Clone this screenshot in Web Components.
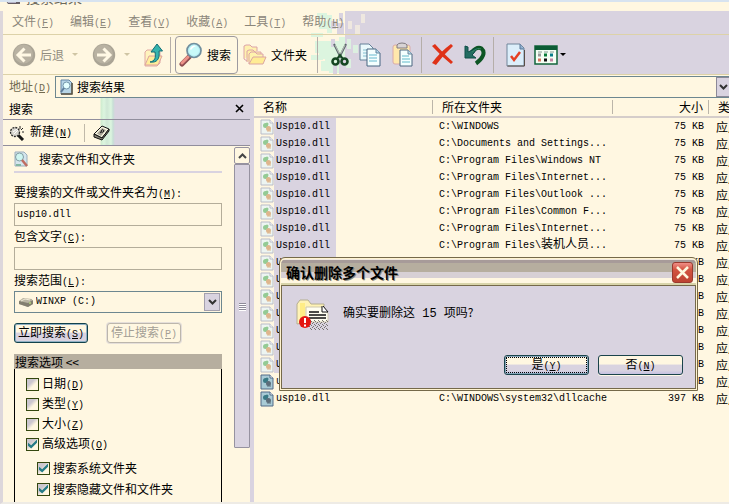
<!DOCTYPE html>
<html lang="zh-CN">
<head>
<meta charset="utf-8">
<title>搜索结果</title>
<style>
  :root {
    --cream: #fff7e1;
    --lavender: #d9d3e0;
    --mint: #dcf5df;
    --rule: #ddd2a8;
    --steel: #6d8790;
  }
  html, body {
    height: 100%;
    margin: 0;
    overflow: hidden;
  }
  body {
    background: var(--cream);
    color: #000;
    font: 12px/16px "Noto Sans CJK SC", sans-serif;
  }
</style>
</head>
<body>
<search-window></search-window>

<script>
const base = `
  *, *::before, *::after { box-sizing: border-box; }
  :host([hidden]) { display: none; }
  svg { display: block; flex: none; }
  button, input, select { font: inherit; color: inherit; margin: 0; padding: 0; }
  .mono { font-family: "Liberation Mono", "Noto Sans CJK SC", monospace; font-size: 10px; }
`;

const key = (letter) => `<span class="mono">(<u>${letter}</u>)</span>`;

const icons = {
  back: `<svg width="24" height="24" viewBox="0 0 24 24"><circle cx="12" cy="12" r="11.2" fill="#aaa495"/><circle cx="11.5" cy="11" r="9.5" fill="#b9b2a2"/><path d="M12.5 5.500 6 12l6.500 6.500M6.500 12H19" fill="none" stroke="#fff8e4" stroke-width="3"/></svg>`,
  forward: `<svg width="24" height="24" viewBox="0 0 24 24"><circle cx="12" cy="12" r="11.2" fill="#aaa495"/><circle cx="11.5" cy="11" r="9.5" fill="#b9b2a2"/><path d="M11.5 5.500 18 12l-6.500 6.500M17.500 12H5" fill="none" stroke="#fff8e4" stroke-width="3"/></svg>`,
  up: `<svg width="20" height="24" viewBox="0 0 20 24"><path d="M1 9l2-2h5l2 2h6v11l-3 3H1z" fill="#fff3bd" stroke="#e0a9a3"/><path d="M1 22 5 13h13l-4 9z" fill="#ffee9a" stroke="#dda2a0"/><path d="M6 19c5-1 6-4 5-10H7l6-8 5.500 7H15c1 8-2 12-9 11z" fill="#35b4ad" stroke="#136d76"/></svg>`,
  search: `<svg width="24" height="25" viewBox="0 0 24 25"><path d="M10 15 3 22" stroke="#8e4d50" stroke-width="5" stroke-linecap="round"/><path d="M9 15 3 21" stroke="#ed9389" stroke-width="3" stroke-linecap="round"/><circle cx="15" cy="8.500" r="7" fill="#b6eef4" stroke="#718f9e" stroke-width="1.700"/><circle cx="15" cy="8.500" r="5" fill="#c8faf9"/><path d="M11 7q2-5 7-3-3 0-6 4z" fill="#fff"/></svg>`,
  folders: `<svg width="24" height="22" viewBox="0 0 24 22"><path d="M1 15V2l2-1h4l2 2h5v4M1 15l3 2" fill="#fff1af" stroke="#dca3a8"/><path d="M4 18V7l2-1h4l2 2h6v4" fill="#fff1a5" stroke="#dca3a8"/><path d="M6 20V10l2-2h4l2 2h6v3" fill="#fff3ad" stroke="#dca3a8"/><path d="M6 20 10 13h13l-3 7z" fill="#ffec94" stroke="#dba5a2"/></svg>`,
  cut: `<svg width="18" height="24" viewBox="0 0 18 24"><path d="M3 1 10 15M15 1 8 15" stroke="#59676b" stroke-width="2"/><path d="M4 2 10 14M14 2 8 14" stroke="#d7d9d0" stroke-width=".8"/><circle cx="4.500" cy="18.500" r="3" fill="none" stroke="#154622" stroke-width="2.600"/><circle cx="13.500" cy="18.500" r="3" fill="none" stroke="#154622" stroke-width="2.600"/><path d="M6 16 9 12l3 4" fill="none" stroke="#154622" stroke-width="2"/></svg>`,
  copy: `<svg width="23" height="24" viewBox="0 0 23 24"><path d="M1 1h9l4 4v12H1z" fill="#eaf9fb" stroke="#658099"/><path d="M4 7h7M4 10h7M4 13h7" stroke="#82bfd0"/><path d="M8 6h9l4 4v13H8z" fill="#f4ffff" stroke="#476481"/><path d="M17 6v4h4" fill="#b5d9ed" stroke="#60849c"/><path d="M10 12h8M10 15h8M10 18h8" stroke="#66b9cf"/></svg>`,
  paste: `<svg width="22" height="25" viewBox="0 0 22 25"><rect x="1" y="3" width="17" height="19" rx="2" fill="#ffe8ac" stroke="#d9aaaa"/><path d="M5 3q1-2 5-2t5 2v3H5z" fill="#d8d3d5" stroke="#817b80"/><path d="M8 8h8l4 4v12H8z" fill="#f4ffff" stroke="#4d6680"/><path d="M16 8v4h4" fill="#b8def0" stroke="#6b8398"/><path d="M10 14h7M10 17h8M10 20h8" stroke="#63b9ca"/></svg>`,
  remove: `<svg width="23" height="23" viewBox="0 0 23 23"><path d="M1 3 4 1q7 8 18 18l-2 2Q10 13 1 3z" fill="#df3218"/><path d="M20 1 22 3Q13 11 5 22l-4-2Q9 9 20 1z" fill="#df3218"/></svg>`,
  undo: `<svg width="23" height="22" viewBox="0 0 23 22"><path d="M7 9Q13 2 17.500 4.500c4.500 4 1 10.500-5.500 15" fill="none" stroke="#0d5524" stroke-width="4"/><path d="M1 2l3 1v5l9-4-3 5-2 2 4 3H1z" fill="#236c62" stroke="#0e4f48"/><path d="M8 8Q14 3 17 5" fill="none" stroke="#318a61"/></svg>`,
  check: `<svg width="20" height="24" viewBox="0 0 20 24"><path d="M1 1h13l4 4v18H1z" fill="#dceefa" stroke="#71859b"/><path d="M14 1v5h4" fill="#8eafd0" stroke="#5a7899"/><path d="M1.500 23h17V7" fill="none" stroke="#594d45"/><path d="M5 13 8 17 14 9" fill="none" stroke="#e54124" stroke-width="2.500"/></svg>`,
  views: `<svg width="24" height="20" viewBox="0 0 24 20"><rect x="1" y="1" width="22" height="18" fill="#f5fff4" stroke="#12653b" stroke-width="1.500"/><path d="M1 1h22v4H1z" fill="#0c5c35"/><path d="M4 7h4M10 7h4M16 7h4" stroke="#849a91"/><path d="M4 10h3" stroke="#999" stroke-width="3"/><path d="M10 10h3" stroke="#087c38" stroke-width="3"/><path d="M16 10h3" stroke="#0a7d8b" stroke-width="3"/><path d="M4 15h3" stroke="#db735f" stroke-width="3"/><path d="M10 15h3" stroke="#111" stroke-width="3"/><path d="M16 15h3" stroke="#c384a3" stroke-width="3"/></svg>`,
  results: `<svg width="14" height="16" viewBox="0 0 14 16"><path d="M2 1h8l3 3v11H2z" fill="#b6d4e6" stroke="#6285a6"/><path d="M2 15h11V4" fill="none" stroke="#5a5140" stroke-width="1.500"/><circle cx="7.500" cy="6.500" r="3.500" fill="#e4ffff" stroke="#7397ac"/><path d="M5 9 2 13" stroke="#5d7d9c" stroke-width="2"/></svg>`,
  fresh: `<svg width="16" height="16" viewBox="0 0 16 16"><path d="M9 10l5 5" stroke="#171717" stroke-width="3"/><circle cx="6" cy="7" r="4.500" fill="#d8d6cf" stroke="#292929" stroke-width="1.300" stroke-dasharray="2 1"/><path d="M4 7 8 4M5 9l4-4" stroke="#fff"/><path d="M11 1v3M14 3l-2 2M13 7h2" stroke="#222"/></svg>`,
  book: `<svg width="18" height="16" viewBox="0 0 18 16"><path d="M1 9 9 1l7 3-7 9z" fill="#f7f4df" stroke="#111"/><path d="M1 9v3l8 3 7-9V4l-7 9z" fill="#888579" stroke="#111"/><path d="M4 8.500 9 3l4 2-5 6z" fill="#aaa699"/><path d="M7 8q2-1 1-2 2-3 3 0-1 2-3 1" fill="none" stroke="#222"/></svg>`,
  page: `<svg width="14" height="16" viewBox="0 0 14 16"><path d="M1 1h9l3 3v11H1z" fill="#d4e5ed" stroke="#9badbc"/><circle cx="5.500" cy="6" r="4" fill="#cef5f1" stroke="#829da2"/><path d="M8 9l5 6" stroke="#bf6c60" stroke-width="2.500"/><path d="M2 14h5" stroke="#83b6a2" stroke-width="2"/></svg>`,
  drive: `<svg width="16" height="11" viewBox="0 0 16 11"><path d="M1 4 5 1l9 1 1 5-5 3-9-3z" fill="#b9b4a2"/><path d="M1 4l9 2 5-3v4l-5 3-9-3z" fill="#837f70"/><path d="M3 4l4-2 5 1" stroke="#efead7" fill="none"/><circle cx="12" cy="6" r="1" fill="#b3d47b"/></svg>`,
  dll: `<svg width="14" height="16" viewBox="0 0 14 16"><path d="M1 1h9l3 3v11H1z" fill="var(--sheet, #edf5f1)" stroke="var(--edge, #b9bcc8)"/><path d="M10 1v3h3" fill="#fff" stroke="var(--edge, #b9bcc8)"/><circle cx="5.500" cy="6.500" r="2.500" fill="var(--gear, #94cb95)"/><circle cx="7" cy="5" r="1.500" fill="var(--gear, #94cb95)"/><circle cx="8.500" cy="9.500" r="2.500" fill="var(--cog, #deb68d)"/><path d="M7 12h4" stroke="var(--cog, #deb68d)"/></svg>`,
  chevron: `<svg width="9" height="6" viewBox="0 0 9 6"><path d="M1 1l3.500 3.500L8 1" fill="none" stroke="#333" stroke-width="2"/></svg>`,
  chevronUp: `<svg width="9" height="6" viewBox="0 0 9 6"><path d="M1 5l3.500-3.500L8 5" fill="none" stroke="#444" stroke-width="2"/></svg>`,
  close: `<svg width="9" height="9" viewBox="0 0 9 9"><path d="M1 1l7 7M8 1 1 8" stroke="#000" stroke-width="1.600"/></svg>`,
  warning: `<svg width="34" height="32" viewBox="0 0 34 32"><defs><pattern id="dots" width="4" height="4" patternUnits="userSpaceOnUse"><path d="M0 0h1v1H0zM2 1h1v1H2zM1 3h1v1H1zM3 2h1v1H3z" fill="#77736e"/></pattern></defs><path d="M1 25V5l3-4h8l3 4h13v15z" fill="#fff3b5" stroke="#b5ae91"/><path d="M4 4h5v19H4z" fill="#ffed86"/><path d="M10 8h15l7 6v9H10z" fill="#fffef0" stroke="#cfc8ae"/><path d="M26 7v6h6l-5-6" fill="#fff" stroke="#111"/><path d="M13 13h10M13 16h17M13 19h17" stroke="#111" stroke-width="1.300"/><path d="M13 21h19v10H13z" fill="url(#dots)"/><circle cx="9" cy="23" r="6" fill="#e41512"/><path d="M9 19v5M9 25.500v2" stroke="#fff" stroke-width="2"/></svg>`,
};

function define(name, render) {
  customElements.define(name, class extends HTMLElement {
    constructor() {
      super();
      this.attachShadow({ mode: "open" });
    }
    connectedCallback() {
      this.shadowRoot.innerHTML = render(this);
    }
  });
}

define("title-strip", () => `
  <style>
    ${base}
    :host { display: block; height: 11px; border-top: 2px solid #d7e3f0; background: var(--cream); }
    div { display: flex; align-items: flex-end; gap: 6px; height: 3px; padding-left: 6px; overflow: hidden; color: #6d695d; font-size: 14px; }
  </style>
  <div>
    <svg width="14" height="4" viewBox="0 0 14 4"><path d="M0 0h14v3H2z" fill="#665d63"/><path d="M1 0h9v2H2z" fill="#b5b3c8"/></svg>
    <span>搜索结果</span>
  </div>
`);

define("menu-bar", () => `
  <style>
    ${base}
    :host { display: flex; align-items: center; gap: 16px; height: 24px; padding-left: 9px; border-bottom: 1px solid var(--rule); color: #8b867a; }
    button { border: 0; background: none; white-space: nowrap; }
  </style>
  ${[["文件", "F"], ["编辑", "E"], ["查看", "V"], ["收藏", "A"], ["工具", "T"], ["帮助", "H"]]
    .map(([text, letter]) => `<button type="button">${text}${key(letter)}</button>`).join("")}
`);

define("tool-button", (el) => `
  <style>
    ${base}
    :host { display: block; }
    button { display: flex; align-items: center; gap: 4px; height: 38px; border: 1px solid transparent; background: none; white-space: nowrap; }
    :host([pressed]) button { border-color: #9d9aa0; border-radius: 4px; padding: 0 6px 0 3px; background: var(--cream); }
    :host([muted]) button { color: #918c7f; }
  </style>
  <button type="button" aria-label="${el.getAttribute("label") || ""}">${icons[el.getAttribute("icon")]}<slot></slot></button>
`);

define("drop-mark", () => `
  <style>
    :host { display: block; border: 3px solid transparent; border-top-color: #cfc5a4; border-bottom: 0; }
    :host([dark]) { border-top-color: #000; }
  </style>
`);

define("tool-bar", () => `
  <style>
    ${base}
    :host { display: flex; align-items: center; height: 40px; padding-left: 8px; border-bottom: 1px solid var(--rule); }
    hr { width: 1px; height: 36px; margin: 0; border: 0; background: #b5aea9; }
    .group, .pair { display: flex; align-items: center; }
    .nav { gap: 13px; padding-right: 5px; }
    .nav .pair { gap: 7px; }
    .panes { gap: 4px; padding: 0 9px 0 4px; }
    .edit { gap: 8px; padding: 0 6px 0 12px; }
    .undo { gap: 8px; padding: 0 5px 0 8px; }
    .more { gap: 6px; padding-left: 11px; }
    .more .pair { gap: 1px; }
  </style>
  <div class="group nav">
    <div class="pair">
      <tool-button icon="back" muted>后退</tool-button>
      <drop-mark></drop-mark>
    </div>
    <div class="pair">
      <tool-button icon="forward" label="前进"></tool-button>
      <drop-mark></drop-mark>
    </div>
    <tool-button icon="up" label="向上"></tool-button>
  </div>
  <hr>
  <div class="group panes">
    <tool-button icon="search" pressed>搜索</tool-button>
    <tool-button icon="folders">文件夹</tool-button>
  </div>
  <hr>
  <div class="group edit">
    <tool-button icon="cut" label="剪切"></tool-button>
    <tool-button icon="copy" label="复制"></tool-button>
    <tool-button icon="paste" label="粘贴"></tool-button>
  </div>
  <hr>
  <div class="group undo">
    <tool-button icon="remove" label="删除"></tool-button>
    <tool-button icon="undo" label="撤销"></tool-button>
  </div>
  <hr>
  <div class="group more">
    <tool-button icon="check" label="属性"></tool-button>
    <div class="pair">
      <tool-button icon="views" label="查看"></tool-button>
      <drop-mark dark></drop-mark>
    </div>
  </div>
`);

/* menu and toolbar share one patchy backdrop where cream breaks up into lavender */
define("chrome-bars", () => {
  const mint = [[12, 2, 10, 6], [14, 10, 8, 8], [6, 22, 12, 4], [10, 30, 10, 12], [14, 38, 16, 10], [6, 44, 12, 5], [16, 50, 18, 10], [34, 26, 6, 14], [24, 56, 10, 6], [22, 4, 5, 18], [20, 30, 14, 20], [34, 40, 8, 8]];
  const lilac = [[40, 0, 20, 64], [26, 10, 5, 8], [32, 12, 7, 12], [34, 2, 4, 8], [34, 48, 6, 16], [26, 28, 4, 8], [28, 54, 4, 10]];
  const gaps = [[43, 10, 4, 8], [50, 14, 5, 10], [56, 3, 4, 9]];
  const pale = [[42, 28, 4, 10], [48, 34, 5, 8], [41, 48, 5, 9]];
  const rects = (list, fill) => list.map(([x, y, w, h]) => `<rect x="${x}" y="${y}" width="${w}" height="${h}" fill="${fill}"/>`).join("");
  return `
    <style>
      ${base}
      :host { display: grid; }
      .backdrop, .bars { grid-area: 1 / 1; min-width: 0; }
      .backdrop { display: flex; padding-left: 302px; }
      .backdrop i { flex: 1; background: var(--lavender); }
    </style>
    <div class="backdrop" aria-hidden="true">
      <svg width="60" height="64" viewBox="0 0 60 64">${rects(mint, "#dcf5df")}${rects(lilac, "#d9d3e0")}${rects(gaps, "#efe8e0")}${rects(pale, "#dcf0e0")}</svg><i></i>
    </div>
    <div class="bars"><slot></slot></div>
  `;
});

define("address-bar", () => `
  <style>
    ${base}
    :host { display: flex; align-items: center; height: 23px; padding: 1px 0 0 6px; background: var(--cream); gap: 4px; }
    label { color: #716a50; white-space: nowrap; }
    .box { flex: 1; min-width: 0; display: flex; align-items: center; height: 22px; padding-left: 3px; gap: 4px; border: 1px solid var(--steel); border-right: 0; }
    input { flex: 1; min-width: 0; border: 0; background: none; outline: 0; }
    button { width: 13px; height: 20px; display: flex; align-items: center; justify-content: center; overflow: hidden; border: 1px solid #8c8998; border-right: 0; background: var(--lavender); }
  </style>
  <label for="address">地址${key("D")}</label>
  <div class="box">
    ${icons.results}
    <input id="address" value="搜索结果">
    <button type="button" aria-label="展开">${icons.chevron}</button>
  </div>
`);

define("check-option", (el) => `
  <style>
    ${base}
    :host { display: block; height: 20px; }
    label { display: flex; align-items: center; gap: 3px; height: 20px; white-space: nowrap; }
    input { appearance: none; width: 13px; height: 13px; border: 1px solid #34470f; background: linear-gradient(135deg, #ccc7cf 0 35%, var(--cream) 60%); display: grid; place-items: center; }
    input:checked::before { content: ""; width: 9px; height: 9px; background: #267b87; clip-path: polygon(0 35%, 35% 65%, 100% 0, 100% 35%, 35% 100%, 0 70%); }
  </style>
  <label><input type="checkbox" ${el.hasAttribute("checked") ? "checked" : ""}><span><slot></slot>${el.hasAttribute("key") ? key(el.getAttribute("key")) : ""}</span></label>
`);

define("scroll-track", () => `
  <style>
    ${base}
    :host { display: flex; flex-direction: column; width: 16px; }
    button, .thumb { display: grid; place-items: center; border: 1px solid #9692a0; }
    button { height: 17px; margin-top: 1px; border-radius: 2px; background: var(--cream); }
    .thumb { flex: 0 1 284px; background: var(--lavender); align-content: center; gap: 1px; border-radius: 1px; }
    .thumb i { width: 7px; height: 1px; background: #8e8b99; box-shadow: 0 1px #fff; }
  </style>
  <button type="button" aria-label="向上滚动">${icons.chevronUp}</button>
  <div class="thumb"><i></i><i></i><i></i><i></i></div>
`);

define("search-pane", () => `
  <style>
    ${base}
    :host { display: flex; flex-direction: column; width: 247px; flex: none; overflow: hidden; background: var(--cream); }
    header { flex: none; background: linear-gradient(90deg, var(--cream) 97px, #cfeccf 98px, var(--mint) 101px, #cfe7d5 104px, var(--mint) 108px, #c7dfd5 110px, var(--lavender) 112px); }
    .title, .actions { display: flex; align-items: center; padding: 0 6px; border-bottom: 1px solid #918e9d; }
    .title { height: 22px; justify-content: space-between; }
    .actions { height: 26px; gap: 6px; }
    .actions hr { width: 1px; height: 18px; margin: 0 2px 0 6px; border: 0; background: #c0b9a9; }
    header button { display: flex; align-items: center; gap: 5px; border: 0; background: none; white-space: nowrap; }
    h1 { margin: 0; font: inherit; }
    .body { flex: 1; min-height: 0; display: flex; justify-content: space-between; }
    form { width: 208px; margin-left: 11px; display: flex; flex-direction: column; }
    h2 { display: flex; align-items: center; gap: 11px; height: 27px; margin: 0 0 11px; border-bottom: 2px solid var(--lavender); font: inherit; }
    .field { display: flex; flex-direction: column; gap: 3px; margin-bottom: 2px; }
    .field label { height: 16px; }
    .field input { height: 23px; padding: 0 2px; border: 1px solid #b4ad9a; border-radius: 0; background: var(--cream); }
    .pick { display: grid; height: 22px; border: 1px solid var(--steel); align-items: center; }
    .pick > * { grid-area: 1 / 1; }
    .pick select { appearance: none; width: 100%; height: 20px; padding-left: 21px; border: 0; background: none; }
    .pick > svg { margin-left: 3px; }
    .arrow { justify-self: end; display: grid; place-items: center; width: 16px; height: 18px; margin-right: 1px; border: 1px solid #a4a0ae; background: var(--lavender); pointer-events: none; }
    .run { display: flex; gap: 19px; margin: 8px 0 11px; }
    .run button { width: 74px; height: 20px; border: 1px solid #12424c; border-radius: 3px; background: linear-gradient(var(--cream) 45%, var(--lavender) 50%); box-shadow: inset 0 0 0 1px #8fb0c4; white-space: nowrap; line-height: 16px; }
    .run button:disabled { border-color: #bcb6ac; background: var(--cream); box-shadow: 0 0 0 1px #e5dfda; color: #a39e95; }
    h3 { height: 15px; margin: 0; padding-left: 1px; background: #b6ae9f; font: inherit; line-height: 15px; }
    .options { flex: 1; padding: 5px 0 0 11px; border: solid #000; border-width: 0 1px; }
    .sub { display: grid; gap: 1px; padding: 4px 0 0 11px; }
  </style>
  <header>
    <div class="title"><h1>搜索</h1><button type="button" aria-label="关闭">${icons.close}</button></div>
    <div class="actions">
      <button type="button">${icons.fresh}<span>新建${key("N")}</span></button>
      <hr>
      <button type="button" aria-label="索引">${icons.book}</button>
    </div>
  </header>
  <div class="body">
    <form>
      <h2>${icons.page}搜索文件和文件夹</h2>
      <div class="field">
        <label for="name">要搜索的文件或文件夹名为${key("M")}<span class="mono">:</span></label>
        <input id="name" class="mono" value="usp10.dll">
      </div>
      <div class="field">
        <label for="text">包含文字${key("C")}<span class="mono">:</span></label>
        <input id="text">
      </div>
      <div class="field">
        <label for="scope">搜索范围${key("L")}<span class="mono">:</span></label>
        <div class="pick">
          ${icons.drive}
          <select id="scope" class="mono"><option>WINXP (C:)</option></select>
          <span class="arrow">${icons.chevron}</span>
        </div>
      </div>
      <div class="run">
        <button type="button">立即搜索${key("S")}</button>
        <button type="button" disabled>停止搜索${key("P")}</button>
      </div>
      <h3>搜索选项 &lt;&lt;</h3>
      <div class="options">
        <check-option key="D">日期</check-option>
        <check-option key="Y">类型</check-option>
        <check-option key="Z">大小</check-option>
        <check-option key="O" checked>高级选项</check-option>
        <div class="sub">
          <check-option checked>搜索系统文件夹</check-option>
          <check-option checked>搜索隐藏文件和文件夹</check-option>
        </div>
      </div>
    </form>
    <scroll-track></scroll-track>
  </div>
`);

const files = [
  "C:\\WINDOWS",
  "C:\\Documents and Settings...",
  "C:\\Program Files\\Windows NT",
  "C:\\Program Files\\Internet...",
  "C:\\Program Files\\Outlook ...",
  "C:\\Program Files\\Common F...",
  "C:\\Program Files\\Internet...",
  "C:\\Program Files\\<b>装机人员</b>...",
  "", "", "", "", "", "", "",
].map((folder) => ({ name: "Usp10.dll", folder, size: "75 KB", selected: true }));
files.push({ name: "usp10.dll", folder: "", size: "75 KB" });
files.push({ name: "usp10.dll", folder: "C:\\WINDOWS\\system32\\dllcache", size: "397 KB" });

define("file-list", () => `
  <style>
    ${base}
    :host { display: block; flex: 1; min-width: 0; overflow: hidden; background: var(--cream); }
    table { width: 100%; table-layout: fixed; border-collapse: separate; border-spacing: 0; }
    th, td { padding: 0; overflow: hidden; white-space: nowrap; text-align: left; font-weight: normal; }
    th { height: 20px; border-bottom: 2px solid #d5cdca; }
    th span { display: block; padding-left: 9px; border-right: 1px solid #bbb5a9; line-height: 14px; }
    th:last-child span { border: 0; }
    td { height: 17px; line-height: 17px; }
    td:nth-child(2) { padding-left: 6px; }
    td:nth-child(3) { padding-right: 5px; }
    th:nth-child(3) span { padding-right: 5px; }
    th:nth-child(3), td:nth-child(3) { text-align: right; }
    td:nth-child(4) { padding-left: 7px; line-height: 15px; }
    b { font-weight: normal; font-size: 12px; line-height: 16px; }
    .file { display: flex; align-items: center; height: 17px; padding-left: 6px; }
    .file span { padding: 0 6px 0 2px; height: 17px; }
    .selected .file span { background: var(--lavender); }
    tr:not(.selected) { --sheet: #a9cbd6; --edge: #536a88; --gear: #3a7a86; --cog: #5d6d7a; }
  </style>
  <table>
    <colgroup><col style="width:179px"><col style="width:180px"><col style="width:96px"><col></colgroup>
    <thead><tr><th><span>名称</span></th><th><span>所在文件夹</span></th><th><span>大小</span></th><th><span>类型</span></th></tr></thead>
    <tbody>
      ${files.map((file) => `
        <tr class="${file.selected ? "selected" : ""}">
          <td class="mono"><div class="file">${icons.dll}<span>${file.name}</span></div></td>
          <td class="mono">${file.folder}</td>
          <td class="mono">${file.size}</td>
          <td>应用程序扩展</td>
        </tr>`).join("")}
    </tbody>
  </table>
`);

define("confirm-dialog", (el) => `
  <style>
    ${base}
    :host { display: flex; flex-direction: column; width: 419px; padding: 1px; border: 1px solid #75694a; border-radius: 6px 6px 0 0; background: #fff3d0; }
    header { display: flex; align-items: center; justify-content: space-between; height: 26px; padding: 0 3px 0 5px; border-radius: 5px 5px 0 0; background: linear-gradient(#f0e9e0 0 1px, #a79b99 1px 4px, #b6ae9f 4px 13px, #d7d0d5 13px 19px, var(--cream) 19px 24px, #d8d4aa 24px); }
    h2 { margin: 0; font-size: 14px; font-weight: bold; line-height: 20px; text-shadow: 1px 1px #8d877b; }
    header button { display: grid; place-items: center; width: 21px; height: 21px; border: 1px solid #99392e; border-radius: 3px; background: linear-gradient(#f08e86, #d25340 35%, #bd4332); }
    .body { padding: 13px 12px; border: 1px solid #75694a; background: var(--lavender); }
    .message { display: flex; gap: 13px; padding-left: 2px; }
    .message .mono { white-space: pre; }
    p { margin: 0; padding-top: 5px; }
    .actions { display: flex; justify-content: flex-end; gap: 9px; margin-top: 24px; }
    .actions button { width: 85px; height: 20px; padding: 0; border: 1px solid #1b444b; border-radius: 3px; background: linear-gradient(var(--cream) 45%, var(--lavender) 50% 80%, #c5c1e2); box-shadow: 0 1px #fff8e8; position: relative; }
    .actions .default { box-shadow: inset 0 0 0 1px #86a5bb; }
    .default::after { content: ""; position: absolute; inset: 1px; border: 1px dotted #000; }
    ::slotted(.number) { font: 12px "Liberation Mono", monospace; white-space: pre; }
  </style>
  <header>
    <h2>${el.getAttribute("heading")}</h2>
    <button type="button" aria-label="关闭"><svg width="13" height="13" viewBox="0 0 13 13"><path d="M1 1l11 11M12 1 1 12" stroke="#fff8df" stroke-width="2.500"/></svg></button>
  </header>
  <div class="body" role="alertdialog">
    <div class="message">${icons.warning}<p><slot></slot></p></div>
    <div class="actions">
      <button type="button" class="default">是${key("Y")}</button>
      <button type="button">否${key("N")}</button>
    </div>
  </div>
`);

define("search-window", () => `
  <style>
    ${base}
    :host { display: flex; flex-direction: column; height: 100vh; position: relative; }
    .frame { flex: 1; min-height: 0; display: flex; flex-direction: column; border-left: 3px solid #ddd7db; border-bottom: 2px solid #eeebe5; }
    .main { flex: 1; min-height: 0; display: flex; }
    .split { flex: none; width: 4px; background: var(--lavender); }
    confirm-dialog { position: absolute; left: 279px; top: 257px; }
  </style>
  <title-strip></title-strip>
  <div class="frame">
    <chrome-bars>
      <menu-bar></menu-bar>
      <tool-bar></tool-bar>
    </chrome-bars>
    <address-bar></address-bar>
    <div class="main">
      <search-pane></search-pane>
      <div class="split"></div>
      <file-list></file-list>
    </div>
  </div>
  <confirm-dialog heading="确认删除多个文件">确实要删除这<span class="number"> 15 </span>项吗?</confirm-dialog>
`);
</script>
</body>
</html>
